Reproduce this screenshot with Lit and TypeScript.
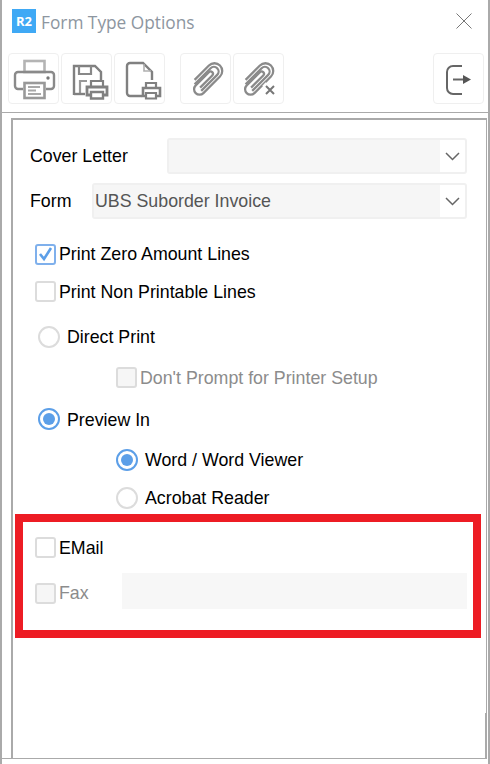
import { LitElement, css, html, svg } from "lit";
import { customElement } from "lit/decorators.js";

const printerIcon = svg`
  <rect x="15.500" y="7" width="20" height="11" fill="none" stroke="#b4b4b4" stroke-width="2.600"/>
  <path d="M14 35H9a3 3 0 0 1-3-3V21a3 3 0 0 1 3-3h33a3 3 0 0 1 3 3v11a3 3 0 0 1-3 3h-5" fill="none" stroke="#8a8a8a" stroke-width="2.400"/>
  <circle cx="39" cy="24" r="1.700" fill="#777"/>
  <rect x="15.500" y="29" width="20" height="15" fill="#fff" stroke="#999" stroke-width="2.600"/>
  <path d="M19 33h12M19 36.500h8M19 40h13" stroke="#a8a8a8" stroke-width="2.200"/>`;

const diskIcon = svg`
  <path d="M12 41V12h21l6 6v8" fill="none" stroke="#808080" stroke-width="2.400"/>
  <path d="M17 12v8h12v-8" fill="none" stroke="#888" stroke-width="2.200"/>
  <path d="M18 40V27h7" fill="none" stroke="#999" stroke-width="2.200"/>
  <path d="M12 40h11" stroke="#808080" stroke-width="2.400"/>
  <path d="M29 27h12v7H29z" fill="#fff" stroke="#808080" stroke-width="2.200"/>
  <path d="M29 41h-4V33h20v8h-4" fill="#fff" stroke="#808080" stroke-width="2.800"/>
  <path d="M29 38h12v6.500H29z" fill="#fff" stroke="#808080" stroke-width="2.400"/>`;

const pageIcon = svg`
  <path d="M27 42H15a3 3 0 0 1-3-3V12a3 3 0 0 1 3-3h13l9 9v8" fill="none" stroke="#808080" stroke-width="2.400"/>
  <path d="M29 10v7h7" fill="none" stroke="#b0b0b0" stroke-width="1.600"/>
  <path d="M31 29h10v5H31z" fill="#fff" stroke="#808080" stroke-width="2.200"/>
  <path d="M31 42h-3v-8h17v8h-3" fill="#fff" stroke="#808080" stroke-width="2.600"/>
  <path d="M31 39h10v5.500H31z" fill="#fff" stroke="#808080" stroke-width="2.200"/>`;

const clipIcon = svg`
  <g transform="translate(26 24.500) rotate(45) scale(.78) translate(-26 -25.500)" fill="none" stroke="#8a8a8a" stroke-width="2.900">
    <path d="M20 42V13a6 6 0 0 1 12 0v29"/>
    <path d="M16 38V12a10 10 0 0 1 20 0v30a7 7 0 0 1-14 0V18a3 3 0 0 1 6 0v22"/>
  </g>`;

const clipRemoveIcon = svg`
  <g transform="translate(-2 0)">${clipIcon}</g>
  <path d="M30 30l12 11M42 30l-12 11" stroke="#fff" stroke-width="5"/>
  <path d="M32 32l8 8M40 32l-8 8" stroke="#777" stroke-width="2"/>`;

const exitIcon = svg`
  <path d="M28 12h-9a6 6 0 0 0-6 6v16a6 6 0 0 0 6 6h9" fill="none" stroke="#666" stroke-width="2"/>
  <path d="M19 25.500h12" stroke="#666" stroke-width="2"/>
  <path d="M29 21l8 4.500-8 4.500z" fill="#555"/>`;

@customElement("app-root")
export class AppRoot extends LitElement {
  static styles = css`
    :host {
      display: block;
      position: relative;
      width: 490px;
      height: 764px;
      overflow: hidden;
      background: #fff;
      font-family: "Liberation Sans", Arial, sans-serif;
      font-size: 17.800px;
      color: #000;
    }

    .window {
      box-sizing: border-box;
      width: 490px;
      height: 764px;
      border-left: 2px solid #aaa;
      border-right: 2px solid #aaa;
      padding-bottom: 5px;
      display: flex;
      flex-direction: column;
    }

    .title-bar {
      display: flex;
      align-items: center;
      height: 53px;
      flex: none;
      padding: 0 16px 11px 10px;
      box-sizing: border-box;
    }

    .logo {
      width: 24px;
      height: 24px;
      background: #3fa9f5;
      color: #fff;
      font: bold 13px "Open Sans", sans-serif;
      display: flex;
      align-items: center;
      justify-content: center;
    }

    .title {
      margin: 2px 0 0 5px;
      font-family: "Open Sans", sans-serif;
      font-size: 17.300px;
      color: #8d96a0;
      flex: 1;
    }

    .close {
      display: block;
      width: 16px;
      height: 16px;
    }

    .toolbar {
      display: flex;
      flex: none;
      padding-left: 6px;
      padding-right: 4px;
      gap: 2px;
      height: 60px;
      box-sizing: border-box;
      border-bottom: 1px solid #aaa;
    }

    .tool {
      box-sizing: border-box;
      width: 51px;
      height: 51px;
      border: 1px solid #efefef;
      border-radius: 4px;
      background: #fff;
    }

    .tool svg {
      display: block;
      width: 49px;
      height: 49px;
    }

    .gap-a {
      margin-left: 13px;
    }

    .push {
      margin-left: auto;
    }

    .content {
      flex: 1;
      display: flex;
      margin-right: 1px;
      padding-top: 5px;
      padding-left: 9px;
      border-bottom: 1px solid #aaa;
    }

    .panel {
      box-sizing: border-box;
      flex: 1;
      border-left: 2px solid #aaa;
      border-top: 2px solid #aaa;
      border-right: 1px solid #aaa;
      padding: 18px 19px 0 17px;
    }

    .field {
      display: flex;
      align-items: center;
      height: 36px;
      margin-bottom: 9px;
    }

    .field label {
      flex: none;
    }

    .cover label {
      width: 137px;
    }

    .form label {
      width: 62px;
    }

    .select {
      box-sizing: border-box;
      flex: 1;
      height: 36px;
      display: flex;
      border: 2px solid #f0f0f0;
      border-radius: 3px;
      color: #555;
    }

    .select .value {
      flex: 1;
      background: #f6f6f6;
      padding-left: 1px;
      line-height: 32px;
    }

    .select .arrow {
      width: 25px;
      display: flex;
      align-items: center;
      justify-content: center;
    }

    .check-row {
      display: flex;
      align-items: center;
      gap: 3px;
      height: 21px;
    }

    .box {
      box-sizing: border-box;
      width: 21px;
      height: 21px;
      flex: none;
      border: 2px solid #dcdcdc;
      border-radius: 3px;
      background: #fff;
      margin-left: 5px;
    }

    .box.on {
      border-color: #7fb0ec;
    }

    .box svg {
      display: block;
    }

    .box.off {
      background: #f6f6f6;
    }

    .muted {
      color: #8c8c8c;
    }

    .low {
      padding-top: 2px;
    }

    .radio-row {
      display: flex;
      align-items: center;
      gap: 7px;
      height: 22px;
    }

    .radio {
      box-sizing: border-box;
      width: 22px;
      height: 22px;
      flex: none;
      border: 2px solid #dcdcdc;
      border-radius: 50%;
      margin-left: 8px;
      display: flex;
      align-items: center;
      justify-content: center;
    }

    .radio.on {
      border-color: #5c9fe8;
    }

    .radio.on::after {
      content: "";
      width: 12px;
      height: 12px;
      border-radius: 50%;
      background: #5c9fe8;
    }

    .nested-check {
      margin-left: 81px;
    }

    .nested-radio {
      margin-left: 78px;
    }

    .nested-radio .radio {
      margin-left: 8px;
    }

    .mt-16 { margin-top: 16px; }
    .mt-19 { margin-top: 19px; }
    .mt-20 { margin-top: 20px; }
    .mt-24 { margin-top: 24px; }
    .mt-25 { margin-top: 25px; }
    .mt-28 { margin-top: 28px; }

    .fax {
      height: 36px;
      display: flex;
      align-items: center;
      margin-top: 15px;
    }

    .fax .check-row {
      width: 92px;
      flex: none;
      margin-top: 4px;
    }

    .fax-input {
      flex: 1;
      height: 36px;
      background: #f7f7f7;
    }

    .highlight {
      position: absolute;
      left: 15px;
      top: 514px;
      width: 466px;
      height: 124px;
      box-sizing: border-box;
      border: 8px solid #ed1c24;
    }

    .grip {
      position: absolute;
      left: 485px;
      top: 713px;
      width: 1px;
      height: 46px;
      background: #aaa;
    }
  `;

  render() {
    return html`
      <div class="window">
        <div class="title-bar">
          <div class="logo">R2</div>
          <div class="title">Form Type Options</div>
          <svg class="close" viewBox="0 0 16 16">
            <path d="M0.500 0.500L15.500 15.500M15.500 0.500L0.500 15.500" stroke="#777" stroke-width="1" />
          </svg>
        </div>
        <div class="toolbar">
          ${this.renderTool(printerIcon)}
          ${this.renderTool(diskIcon)}
          ${this.renderTool(pageIcon)}
          ${this.renderTool(clipIcon, "gap-a")}
          ${this.renderTool(clipRemoveIcon)}
          ${this.renderTool(exitIcon, "push")}
        </div>
        <div class="content">
          <div class="panel">
            <div class="field cover">
              <label>Cover Letter</label>
              ${this.renderSelect("")}
            </div>
            <div class="field form">
              <label>Form</label>
              ${this.renderSelect("UBS Suborder Invoice")}
            </div>
            <div class="check-row mt-25">
              <div class="box on">
                <svg width="17" height="17" viewBox="0 0 17 17">
                  <path d="M3 8l4 5 7-11" fill="none" stroke="#5c9fe8" stroke-width="2.600" />
                </svg>
              </div>
              <span>Print Zero Amount Lines</span>
            </div>
            <div class="check-row mt-16">
              <div class="box"></div>
              <span class="low">Print Non Printable Lines</span>
            </div>
            <div class="radio-row mt-24">
              <div class="radio"></div>
              <span>Direct Print</span>
            </div>
            <div class="check-row nested-check mt-19">
              <div class="box off"></div>
              <span class="muted low">Don't Prompt for Printer Setup</span>
            </div>
            <div class="radio-row mt-20">
              <div class="radio on"></div>
              <span class="low">Preview In</span>
            </div>
            <div class="radio-row nested-radio mt-19">
              <div class="radio on"></div>
              <span>Word / Word Viewer</span>
            </div>
            <div class="radio-row nested-radio mt-16">
              <div class="radio"></div>
              <span>Acrobat Reader</span>
            </div>
            <div class="check-row mt-28">
              <div class="box"></div>
              <span class="low">EMail</span>
            </div>
            <div class="fax">
              <div class="check-row">
                <div class="box off"></div>
                <span class="muted">Fax</span>
              </div>
              <div class="fax-input"></div>
            </div>
          </div>
        </div>
      </div>
      <div class="grip"></div>
      <div class="highlight"></div>
    `;
  }

  private renderTool(icon: unknown, extra = "") {
    return html`<div class="tool ${extra}"><svg viewBox="0 0 49 49">${icon}</svg></div>`;
  }

  private renderSelect(value: string) {
    return html`
      <div class="select">
        <div class="value">${value}</div>
        <div class="arrow">
          <svg width="15" height="9" viewBox="0 0 15 9">
            <path d="M1 1l6.500 6.500L14 1" fill="none" stroke="#666" stroke-width="1.500" />
          </svg>
        </div>
      </div>
    `;
  }
}
